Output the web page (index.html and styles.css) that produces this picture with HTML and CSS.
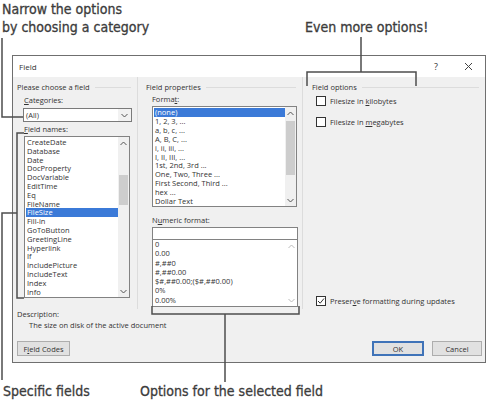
FILE: index.html
```html
<!DOCTYPE html>
<html lang="en">
<head>
  <meta charset="UTF-8">
  <title>Field dialog</title>
  <link rel="stylesheet" href="styles.css">
</head>
<body>
<div class="sheet">

  <!-- Callouts above the dialog -->
  <div class="callouts-top">
    <div class="note note-narrow">Narrow the options<br>by choosing a category</div>
    <div class="note note-more">Even more options!</div>
  </div>

  <!-- The Field dialog -->
  <div class="dialog">
    <div class="titlebar">
      <span class="title">Field</span>
      <span class="tb-help">?</span>
      <span class="tb-close">
        <svg width="9" height="9" viewBox="0 0 9 9"><path d="M1 1L8 8M8 1L1 8" stroke="#444" stroke-width="1"/></svg>
      </span>
    </div>

    <div class="dialog-body">
      <div class="columns">

        <div class="col col-choose">
          <div class="group-title">Please choose a field</div>
          <div class="lbl"><u>C</u>ategories:</div>
          <div class="combo">
            <span>(All)</span>
            <span class="combo-btn">
              <svg width="7" height="5" viewBox="0 0 7 5"><path d="M0.5 1L3.5 4L6.5 1" fill="none" stroke="#555" stroke-width="1"/></svg>
            </span>
          </div>
          <div class="lbl lbl-names"><u>F</u>ield names:</div>
          <div class="listbox list-names">
            <div class="items">
              <div>CreateDate</div>
              <div>Database</div>
              <div>Date</div>
              <div>DocProperty</div>
              <div>DocVariable</div>
              <div>EditTime</div>
              <div>Eq</div>
              <div>FileName</div>
              <div class="sel">FileSize</div>
              <div>Fill-in</div>
              <div>GoToButton</div>
              <div>GreetingLine</div>
              <div>Hyperlink</div>
              <div>If</div>
              <div>IncludePicture</div>
              <div>IncludeText</div>
              <div>Index</div>
              <div>Info</div>
            </div>
            <div class="scrollbar">
              <svg class="arrow" width="7" height="5" viewBox="0 0 7 5"><path d="M0.5 4L3.5 1L6.5 4" fill="none" stroke="#555" stroke-width="1"/></svg>
              <div class="track"><div class="thumb thumb-names"></div></div>
              <svg class="arrow" width="7" height="5" viewBox="0 0 7 5"><path d="M0.5 1L3.5 4L6.5 1" fill="none" stroke="#555" stroke-width="1"/></svg>
            </div>
          </div>
        </div>

        <div class="col col-props">
          <div class="group-title">Field properties</div>
          <div class="lbl">Forma<u>t</u>:</div>
          <div class="listbox list-format">
            <div class="items">
              <div class="sel">(none)</div>
              <div>1, 2, 3, ...</div>
              <div>a, b, c, ...</div>
              <div>A, B, C, ...</div>
              <div>i, ii, iii, ...</div>
              <div>I, II, III, ...</div>
              <div>1st, 2nd, 3rd ...</div>
              <div>One, Two, Three ...</div>
              <div>First Second, Third ...</div>
              <div>hex ...</div>
              <div>Dollar Text</div>
            </div>
            <div class="scrollbar">
              <svg class="arrow" width="7" height="5" viewBox="0 0 7 5"><path d="M0.5 4L3.5 1L6.5 4" fill="none" stroke="#555" stroke-width="1"/></svg>
              <div class="track"><div class="thumb thumb-format"></div></div>
              <svg class="arrow" width="7" height="5" viewBox="0 0 7 5"><path d="M0.5 1L3.5 4L6.5 1" fill="none" stroke="#555" stroke-width="1"/></svg>
            </div>
          </div>
          <div class="lbl lbl-numeric">N<u>u</u>meric format:</div>
          <div class="textbox"></div>
          <div class="listbox list-numeric">
            <div class="items">
              <div>0</div>
              <div>0.00</div>
              <div>#,##0</div>
              <div>#,##0.00</div>
              <div>$#,##0.00;($#,##0.00)</div>
              <div>0%</div>
              <div>0.00%</div>
            </div>
            <div class="scrollbar disabled">
              <svg class="arrow" width="7" height="5" viewBox="0 0 7 5"><path d="M0.5 4L3.5 1L6.5 4" fill="none" stroke="#bbb" stroke-width="1"/></svg>
              <div class="track"></div>
              <svg class="arrow" width="7" height="5" viewBox="0 0 7 5"><path d="M0.5 1L3.5 4L6.5 1" fill="none" stroke="#bbb" stroke-width="1"/></svg>
            </div>
          </div>
        </div>

        <div class="col col-options">
          <div class="group-title">Field options</div>
          <label class="check check-first"><span class="box"></span><span>Filesize in <u>k</u>ilobytes</span></label>
          <label class="check"><span class="box"></span><span>Filesize in <u>m</u>egabytes</span></label>
          <label class="check check-preserve">
            <span class="box">
              <svg width="8" height="8" viewBox="0 0 8 8"><path d="M1 4L3.2 6.2L7 1.5" fill="none" stroke="#333" stroke-width="1"/></svg>
            </span><span>Preser<u>v</u>e formatting during updates</span>
          </label>
        </div>

      </div>

      <div class="description">
        <div>Description:</div>
        <div class="desc-text">The size on disk of the active document</div>
      </div>

      <div class="buttons">
        <button class="btn btn-codes">F<u>i</u>eld Codes</button>
        <button class="btn btn-ok">OK</button>
        <button class="btn btn-cancel">Cancel</button>
      </div>
    </div>
  </div>

  <!-- Callouts below the dialog -->
  <div class="callouts-bottom">
    <div class="note note-specific">Specific fields</div>
    <div class="note note-selected">Options for the selected field</div>
  </div>

  <!-- Leader lines over the picture -->
  <svg class="leaders" width="487" height="400" viewBox="0 0 487 400">
    <path d="M2 38V117H23"/>
    <path d="M24 133H17V298H24"/>
    <path d="M17 213H2V380"/>
    <path d="M152 306V314H299V306M225 314V382"/>
    <path d="M307 86V72H416V86M361 37V72"/>
  </svg>

</div>
</body>
</html>
```

FILE: styles.css
```css
body {
  margin: 0;
  background-color: #fff;
  font-family: "Open Sans", "Noto Sans", sans-serif;
  color: #333;
}
.sheet {
  position: relative;
  width: 487px;
  height: 400px;
  overflow: hidden;
}
.note {
  font-family: "Liberation Sans Narrow", "DejaVu Sans Condensed", Roboto, sans-serif;
  font-size: 14px;
  line-height: 18px;
  color: #3c3c3c;
  -webkit-text-stroke: 0.3px #3c3c3c;
}
.callouts-top {
  display: flex;
  height: 55px;
}
.note-narrow {
  width: 303px;
  padding: 0 0 0 2px;
}
.note-more {
  padding-top: 18px;
}
.callouts-bottom {
  display: flex;
  padding-top: 19px;
}
.note-specific {
  width: 137px;
  padding-left: 3px;
}
.leaders {
  position: absolute;
  left: 0;
  top: 0;
}
.leaders path {
  fill: none;
  stroke: #4d4d4d;
  stroke-width: 1.5;
}

/* Dialog */
.dialog {
  margin-left: 12px;
  width: 474px;
  height: 308px;
  box-sizing: border-box;
  border: 1px solid #6f6f6f;
  display: flex;
  flex-direction: column;
  font-size: 7.5px;
}
.titlebar {
  display: flex;
  align-items: center;
  height: 21px;
  background-color: #fff;
  padding-left: 6px;
}
.title {
  font-size: 8px;
  flex: 1;
}
.tb-help {
  width: 30px;
  font-size: 9px;
}
.tb-close {
  width: 21px;
  display: flex;
}
.dialog-body {
  flex: 1;
  background-color: #f0f0f0;
  display: flex;
  flex-direction: column;
}
.columns {
  display: grid;
  grid-template-columns: 125px 165px 1fr;
  height: 232px;
}
.col {
  display: flex;
  flex-direction: column;
  align-items: flex-start;
  padding-top: 5px;
  border-right: 1px solid #dcdcdc;
}
.col-choose {
  padding-left: 4px;
}
.col-props {
  padding-left: 8px;
}
.col-options {
  padding-left: 9px;
  border-right: none;
}
.group-title {
  display: flex;
  align-items: center;
  height: 10px;
  align-self: stretch;
  margin-right: 6px;
}
.group-title::after {
  content: "";
  flex: 1;
  border-top: 1px solid #dcdcdc;
  margin-left: 5px;
}
.lbl {
  height: 10px;
  line-height: 10px;
  margin: 2px 0 0 6px;
}
.col-choose .lbl {
  margin-top: 3px;
  margin-left: 7px;
}
.col-choose .lbl-names {
  margin-top: 2px;
}
.col-props .lbl-numeric {
  margin-top: 8px;
}

/* Combo box */
.combo {
  display: flex;
  align-items: center;
  justify-content: space-between;
  margin: 3px 0 0 6px;
  width: 109px;
  height: 14px;
  box-sizing: border-box;
  border: 1px solid #7a7a7a;
  background-color: #fff;
  padding-left: 2px;
}
.combo-btn {
  display: flex;
  align-items: center;
  justify-content: center;
  width: 13px;
  height: 12px;
  background-color: #f2f2f2;
}

/* List boxes */
.listbox {
  display: flex;
  box-sizing: border-box;
  border: 1px solid #828282;
  background-color: #fff;
}
.items {
  flex: 1;
  padding: 1px 0 0 1px;
  white-space: nowrap;
  overflow: hidden;
}
.items div {
  padding-left: 1px;
}
.items .sel {
  background-color: #3b7ad8;
  color: #fff;
}
.list-names {
  margin: 2px 0 0 7px;
  width: 106px;
  height: 162px;
}
.list-names .items div {
  line-height: 8.8px;
}
.list-format {
  margin: 2px 0 0 6px;
  width: 145px;
  height: 101px;
}
.list-format .items div {
  line-height: 8.9px;
}
.list-numeric {
  margin-left: 6px;
  width: 146px;
  height: 68px;
}
.list-numeric .items {
  padding-top: 0;
}
.list-numeric .items div {
  line-height: 9.3px;
}
.textbox {
  margin: 2px 0 0 6px;
  width: 146px;
  height: 12px;
  box-sizing: border-box;
  border: 1px solid #828282;
  border-bottom: none;
  background-color: #fff;
}
.scrollbar {
  width: 11px;
  display: flex;
  flex-direction: column;
  align-items: center;
  background-color: #f0f0f0;
  padding: 4px 0 3px;
}
.scrollbar.disabled {
  background-color: #fff;
}
.track {
  flex: 1;
  align-self: stretch;
  padding: 0 1px;
}
.thumb {
  background-color: #cdcdcd;
}
.thumb-names {
  margin-top: 29px;
  height: 30px;
}
.thumb-format {
  margin-top: 5px;
  height: 54px;
}

/* Check boxes */
.check {
  display: flex;
  align-items: center;
  margin: 11px 0 0 4px;
  height: 10px;
}
.check-first {
  margin-top: 4px;
}
.check-preserve {
  margin-top: auto;
  margin-bottom: 3px;
}
.box {
  display: flex;
  align-items: center;
  justify-content: center;
  width: 10px;
  height: 10px;
  box-sizing: border-box;
  border: 1px solid #333;
  background-color: #fff;
  margin-right: 4px;
}

/* Description and buttons */
.description {
  padding-left: 4px;
  height: 21px;
  line-height: 10px;
}
.desc-text {
  padding-left: 12px;
  margin-top: 1px;
}
.buttons {
  display: flex;
  margin-top: 11px;
  padding-left: 4px;
}
.btn {
  font-family: "Open Sans", "Noto Sans", sans-serif;
  font-size: 7.5px;
  color: #333;
  height: 15px;
  padding: 0;
  box-sizing: border-box;
  background-color: #e1e1e1;
  border: 1px solid #adadad;
}
.btn-codes {
  width: 53px;
  margin-right: auto;
}
.btn-ok {
  width: 52px;
  border: 2px solid #3f73b8;
  margin-right: 8px;
}
.btn-cancel {
  width: 50px;
  margin-right: 3px;
}
```
